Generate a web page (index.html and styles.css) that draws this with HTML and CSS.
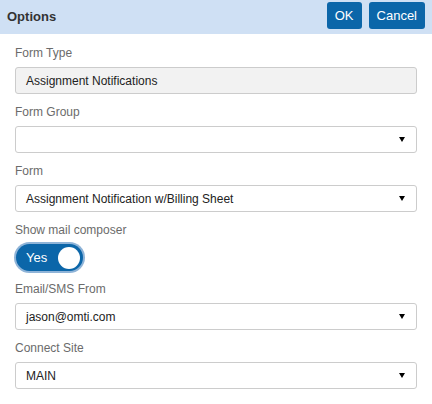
FILE: index.html
```html
<!DOCTYPE html>
<html>
<head>
<meta charset="utf-8">
<link rel="stylesheet" href="styles.css">
</head>
<body>
<div class="header">
  <div class="title">Options</div>
  <div class="actions">
    <button class="btn">OK</button>
    <button class="btn">Cancel</button>
  </div>
</div>
<div class="content">
  <div class="group">
    <div class="label">Form Type</div>
    <div class="field readonly">Assignment Notifications</div>
  </div>
  <div class="group">
    <div class="label">Form Group</div>
    <div class="field select"><span></span><i class="arrow"></i></div>
  </div>
  <div class="group">
    <div class="label">Form</div>
    <div class="field select"><span>Assignment Notification w/Billing Sheet</span><i class="arrow"></i></div>
  </div>
  <div class="group">
    <div class="label">Show mail composer</div>
    <div class="toggle"><span class="toggle-text">Yes</span><span class="knob"></span></div>
  </div>
  <div class="group">
    <div class="label">Email/SMS From</div>
    <div class="field select"><span>jason@omti.com</span><i class="arrow"></i></div>
  </div>
  <div class="group">
    <div class="label">Connect Site</div>
    <div class="field select"><span>MAIN</span><i class="arrow"></i></div>
  </div>
</div>
</body>
</html>
```
FILE: styles.css
```css
html, body {
  margin: 0;
  padding: 0;
  background: #fff;
  font-family: "Liberation Sans", Arial, sans-serif;
}
.header {
  height: 34px;
  background: #cfe0f4;
  display: flex;
  align-items: center;
  justify-content: space-between;
  padding: 0 7px 0 7px;
}
.title {
  font-size: 13px;
  font-weight: bold;
  color: #333;
  margin-top: -2px;
}
.actions {
  display: flex;
  gap: 7px;
  margin-top: -3px;
}
.btn {
  height: 27px;
  border: none;
  border-radius: 3px;
  background: #0b66a9;
  color: #fff;
  font-family: "Liberation Sans", Arial, sans-serif;
  font-size: 13px;
  padding: 0 8px;
  line-height: 27px;
}
.content {
  padding: 11px 15px 0 15px;
}
.group {
  margin-bottom: 10px;
}
.label {
  font-size: 12px;
  line-height: 16px;
  color: #6b6b6b;
  margin-bottom: 6px;
}
.field {
  box-sizing: border-box;
  height: 27px;
  border: 1px solid #ccc;
  border-radius: 3px;
  font-size: 12px;
  color: #222;
  padding: 0 10px;
  display: flex;
  align-items: center;
  justify-content: space-between;
}
.readonly {
  background: #f2f2f2;
}
.arrow {
  width: 0;
  height: 0;
  border-left: 3.5px solid transparent;
  border-right: 3.5px solid transparent;
  border-top: 5px solid #000;
  margin-right: 1px;
}
.toggle {
  box-sizing: border-box;
  width: 67px;
  height: 27px;
  margin-left: 1px;
  border-radius: 14px;
  background: #0b66a9;
  box-shadow: 0 0 0 2px #8fb4d8;
  display: flex;
  align-items: center;
  justify-content: space-between;
  padding: 0 3px 0 10px;
}
.toggle-text {
  color: #fff;
  font-size: 13px;
}
.knob {
  width: 22px;
  height: 22px;
  border-radius: 50%;
  background: #fff;
}
```
